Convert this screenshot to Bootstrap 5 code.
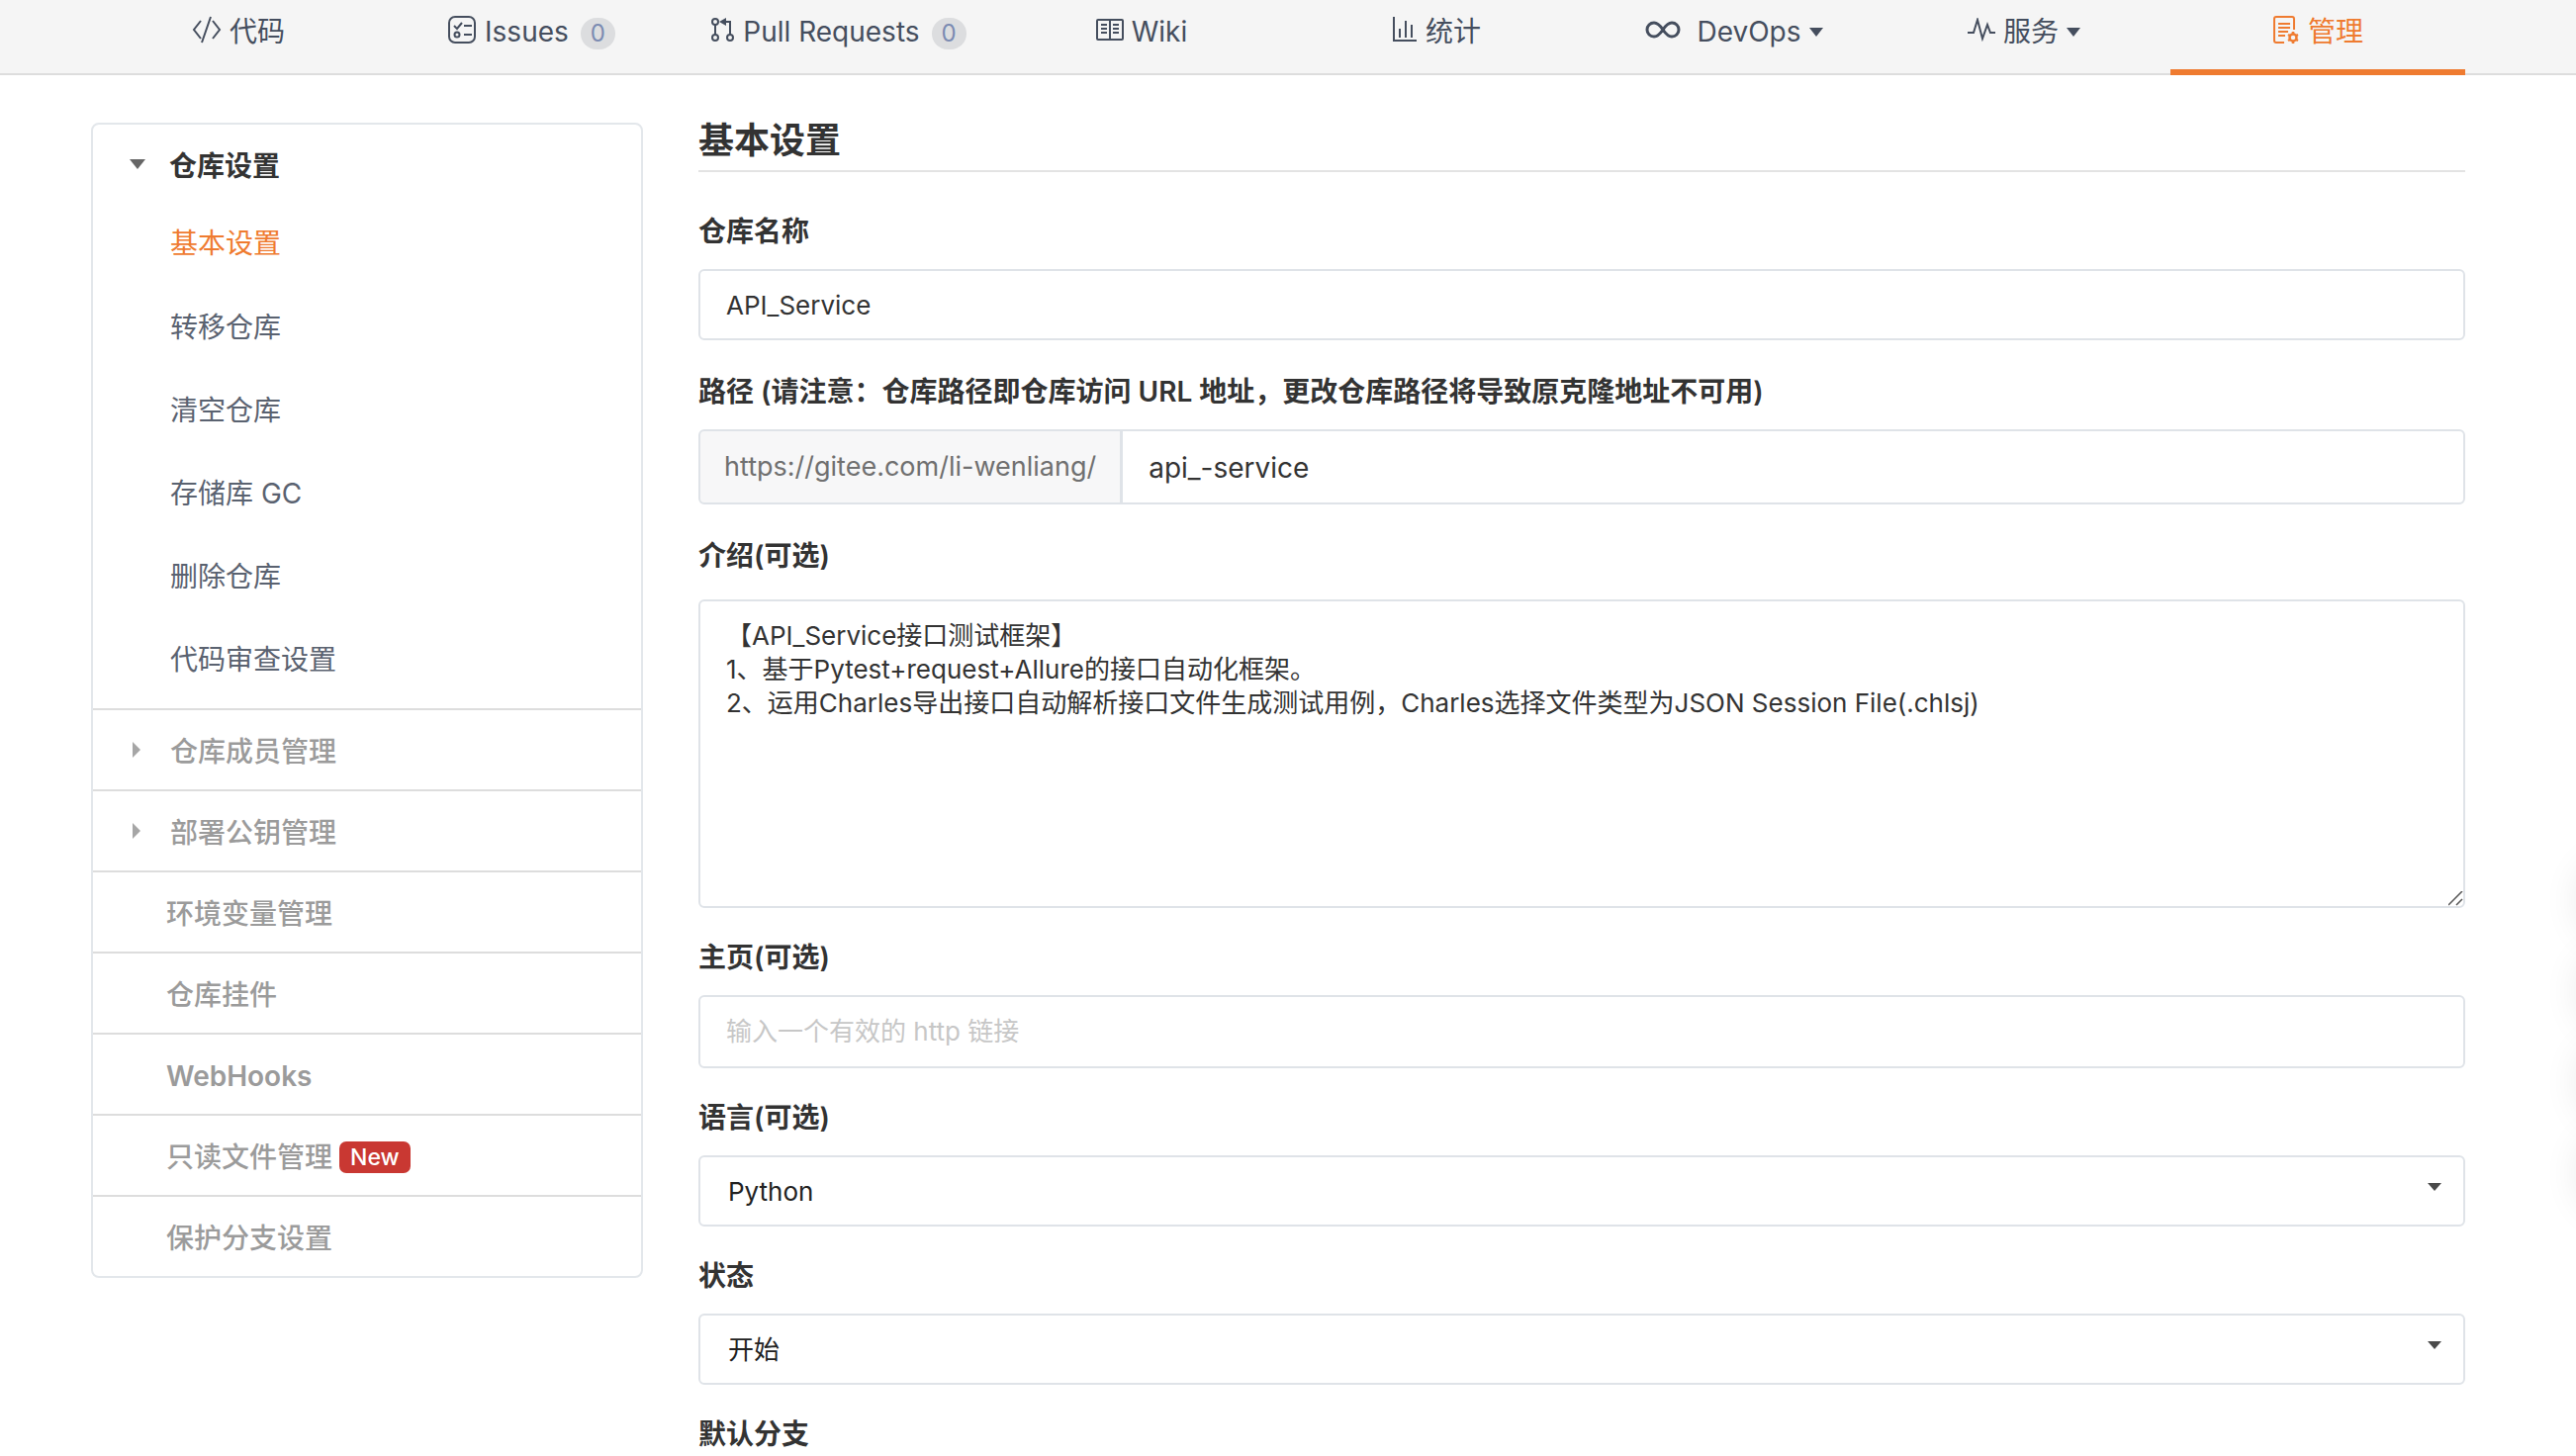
<!DOCTYPE html>
<html lang="zh-CN">
<head>
<meta charset="utf-8">
<meta name="viewport" content="width=device-width, initial-scale=1">
<title>基本设置 - API_Service</title>
<link href="https://cdn.jsdelivr.net/npm/bootstrap@5.3.0/dist/css/bootstrap.min.css" rel="stylesheet">
<style>
:root { --brand: #ef7b30; --ink: #333; --nav-ink: #454e5e; --line: #dfe3e8; }
body { font-family: Inter, "Noto Sans CJK SC", sans-serif; font-size: 28px; line-height: 40px; color: var(--ink); background: #fff; overflow-x: hidden; position: relative; }
a { text-decoration: none; }

.repo-nav { background: #f5f5f5; border-bottom: 2px solid #ddd; padding: 0 112px 0 92px; }
.repo-tabs { display: grid; grid-template-columns: 298fr 294fr 328fr 284fr 312fr 290fr 296fr 298fr; }
.repo-tabs a { height: 76px; margin-bottom: -2px; padding-bottom: 12px; color: var(--nav-ink); }
.repo-tabs a.active { color: var(--brand); border-bottom: 6px solid var(--brand); padding-bottom: 6px; }
.repo-tabs svg { fill: none; stroke: currentColor; stroke-width: 2; flex: none; margin-bottom: 5px; }
.repo-tabs .solid { fill: currentColor; stroke: none; }
.count-pill { background: #dcdddf; color: #7b8bb2; font-size: 24px; line-height: 32px; border-radius: 16px; padding: 0 10px; margin: 4px 0 0 4px; }
.tri-down { width: 0; height: 0; border: 7px solid transparent; border-top: 9px solid currentColor; border-bottom: 0; }

.page-body { padding: 48px 112px 0 92px; gap: 56px; }
.side-menu { width: 558px; flex: none; border: 2px solid #e3e7eb; border-radius: 8px; align-self: flex-start; }
.side-item { display: flex; align-items: center; height: 82px; padding: 4px 0 0 74px; border-top: 2px solid #ddd; color: #9b9b9b; font-weight: 500; }
.side-item.has-arrow { padding-left: 40px; gap: 30px; }
.side-item.is-open { height: 84px; padding: 0 0 0 37px; border-top: 0; color: var(--ink); gap: 24px; font-weight: 600; }
.side-item .arrow { width: 8px; height: 16px; margin-bottom: 4px; background: #a6a6a6; clip-path: polygon(0 0, 100% 50%, 0 100%); }
.side-item.is-open .arrow { width: 16px; height: 10px; background: #666; clip-path: polygon(0 0, 100% 0, 50% 100%); }
.sub-menu { padding-bottom: 7px; }
.sub-link { display: flex; align-items: center; height: 84px; padding-left: 78px; color: #5a6270; }
.sub-link.active { color: var(--brand); height: 72px; margin-bottom: 7px; }
.new-tag { background: #c93832; color: #fff; font-size: 23px; line-height: 32px; border-radius: 7px; padding: 0 11px; margin-left: 7px; }

.page-title { font-size: 36px; line-height: 36px; font-weight: 600; padding-bottom: 12px; border-bottom: 2px solid #e3e3e3; margin-bottom: 40px; }
.field { margin-bottom: 30px; }
.field.roomy { margin-bottom: 32px; }
.field label { display: block; font-weight: 600; margin-bottom: 18px; }
.field .form-control, .field .form-select, .field .input-group-text { border: 2px solid var(--line); border-radius: 6px; color: var(--ink); font-size: 26px; line-height: 34px; padding: 18px 26px 16px; box-shadow: none; }
.field #home { padding-bottom: 18px; }
.field .form-select { appearance: none; height: 72px; padding: 2px 28px 0; color: #222; background: url("data:image/svg+xml,%3Csvg xmlns='http://www.w3.org/2000/svg' viewBox='0 0 14 8'%3E%3Cpath d='M0 0h14L7 8z' fill='%234a4a4a'/%3E%3C/svg%3E") no-repeat right 22px top 26px / 14px 8px #fff; }
.field .form-control::placeholder { color: #c7c7c7; opacity: 1; }
.field.intro label { margin-bottom: 24px; }
.field textarea.form-control { height: 312px; }
.field textarea::-webkit-resizer { background: url("data:image/svg+xml,%3Csvg xmlns='http://www.w3.org/2000/svg' viewBox='0 0 15 15'%3E%3Cpath d='M0 14 14 0M8 14l6-6' stroke='%23555' stroke-width='1.500'/%3E%3C/svg%3E") no-repeat center / 15px 15px; }
.field .input-group-text { background: #f7f7f8; color: #707070; font-size: 27px; padding: 0 24px; border-radius: 6px 0 0 6px; }
.field .input-group .form-control { font-size: 28px; line-height: 38px; border-radius: 0 6px 6px 0; }

.float-tools { position: absolute; left: 100%; top: 870px; }
.float-tools span { display: block; width: 80px; height: 80px; border-radius: 50%; margin: 0 0 12px 6px; box-shadow: 0 0 40px rgba(0,0,0,.12); }
</style>
</head>
<body>
<nav class="repo-nav">
  <div class="repo-tabs">
    <a href="#" class="d-flex align-items-center justify-content-center gap-2"><svg width="30" height="30" viewBox="0 0 30 30"><path d="M9 6 2 15l7 9M21 6l7 9-7 9M19 2l-9 26"/></svg>代码</a>
    <a href="#" class="d-flex align-items-center justify-content-center gap-2"><svg width="30" height="30" viewBox="0 0 30 30"><rect x="2" y="2" width="26" height="26" rx="6"/><path d="m7 11 3 3 5-6M17 11h8M17 20h8"/><circle cx="10" cy="20" r="2.500"/></svg>Issues<span class="count-pill">0</span></a>
    <a href="#" class="d-flex align-items-center justify-content-center gap-2"><svg width="24" height="26" viewBox="0 0 24 26"><circle cx="4" cy="5" r="3"/><circle cx="4" cy="21" r="3"/><circle cx="19" cy="21" r="3"/><path d="M4 8v10M19 18V5h-6"/><path class="solid" d="M8 5l7-4v8z"/></svg>Pull Requests<span class="count-pill">0</span></a>
    <a href="#" class="d-flex align-items-center justify-content-center gap-2"><svg width="28" height="24" viewBox="0 0 28 24"><rect x="1" y="2" width="26" height="20" rx="1"/><path d="M14 2v20M5 7h6M5 11h6M5 15h6M17 7h6M17 11h6M17 15h6"/></svg>Wiki</a>
    <a href="#" class="d-flex align-items-center justify-content-center gap-2"><svg width="26" height="26" viewBox="0 0 26 26"><path d="M2 0v24h23M8 21V12M14 21V4M20 21V8"/></svg>统计</a>
    <a href="#" class="d-flex align-items-center justify-content-center gap-2"><svg width="36" height="20" viewBox="0 0 36 20"><path stroke-width="3" d="M18 10C14 4 11 3 9 3a7 7 0 0 0 0 14c2 0 5-1 9-7s7-7 9-7a7 7 0 0 1 0 14c-2 0-5-1-9-7z"/></svg><span class="ms-2">DevOps</span><span class="tri-down"></span></a>
    <a href="#" class="d-flex align-items-center justify-content-center gap-2"><svg width="28" height="24" viewBox="0 0 28 24"><path d="M0 15h6L10 2l5 19 5-14 3 8h5"/></svg>服务<span class="tri-down"></span></a>
    <a href="#" class="active d-flex align-items-center justify-content-center gap-2"><svg width="28" height="30" viewBox="0 0 28 30"><path d="M12 28H4a2 2 0 0 1-2-2V4a2 2 0 0 1 2-2h16a2 2 0 0 1 2 2v11M6 9h12M6 13h12M6 17h10M6 21h7"/><circle cx="21" cy="23" r="3.500" stroke-width="2.500"/><path stroke-width="2.500" d="M21 17v3M21 26v3M16 20l2 1M24 25l2 1M16 26l2-1M24 21l2-1"/></svg>管理</a>
  </div>
</nav>

<div class="page-body d-flex">
  <aside class="side-menu">
    <a href="#" class="side-item has-arrow is-open"><span class="arrow"></span>仓库设置</a>
    <div class="sub-menu">
      <a href="#" class="sub-link active">基本设置</a>
      <a href="#" class="sub-link">转移仓库</a>
      <a href="#" class="sub-link">清空仓库</a>
      <a href="#" class="sub-link">存储库 GC</a>
      <a href="#" class="sub-link">删除仓库</a>
      <a href="#" class="sub-link">代码审查设置</a>
    </div>
    <a href="#" class="side-item has-arrow"><span class="arrow"></span>仓库成员管理</a>
    <a href="#" class="side-item has-arrow"><span class="arrow"></span>部署公钥管理</a>
    <a href="#" class="side-item">环境变量管理</a>
    <a href="#" class="side-item">仓库挂件</a>
    <a href="#" class="side-item"><b class="fw-semibold">WebHooks</b></a>
    <a href="#" class="side-item">只读文件管理<span class="new-tag">New</span></a>
    <a href="#" class="side-item">保护分支设置</a>
  </aside>

  <main class="flex-grow-1">
    <h1 class="page-title">基本设置</h1>
    <form>
      <div class="field roomy">
        <label for="name">仓库名称</label>
        <input id="name" type="text" class="form-control" value="API_Service">
      </div>
      <div class="field roomy">
        <label for="path">路径 (请注意：仓库路径即仓库访问 URL 地址，更改仓库路径将导致原克隆地址不可用)</label>
        <div class="input-group">
          <span class="input-group-text">https://gitee.com/li-wenliang/</span>
          <input id="path" type="text" class="form-control" value="api_-service">
        </div>
      </div>
      <div class="field intro">
        <label for="intro">介绍(可选)</label>
        <textarea id="intro" class="form-control">【API_Service接口测试框架】
1、基于Pytest+request+Allure的接口自动化框架。
2、运用Charles导出接口自动解析接口文件生成测试用例，Charles选择文件类型为JSON Session File(.chlsj)</textarea>
      </div>
      <div class="field">
        <label for="home">主页(可选)</label>
        <input id="home" type="text" class="form-control" placeholder="输入一个有效的 http 链接">
      </div>
      <div class="field">
        <label for="lang">语言(可选)</label>
        <select id="lang" class="form-select"><option>Python</option></select>
      </div>
      <div class="field">
        <label for="state">状态</label>
        <select id="state" class="form-select"><option>开始</option></select>
      </div>
      <div>
        <div class="field mb-0"><label for="branch" class="mb-0">默认分支</label></div>
      </div>
    </form>
  </main>
</div>
<div class="float-tools" aria-hidden="true"><span></span><span></span><span></span><span></span></div>
<script src="https://cdn.jsdelivr.net/npm/bootstrap@5.3.0/dist/js/bootstrap.bundle.min.js"></script>
</body>
</html>
